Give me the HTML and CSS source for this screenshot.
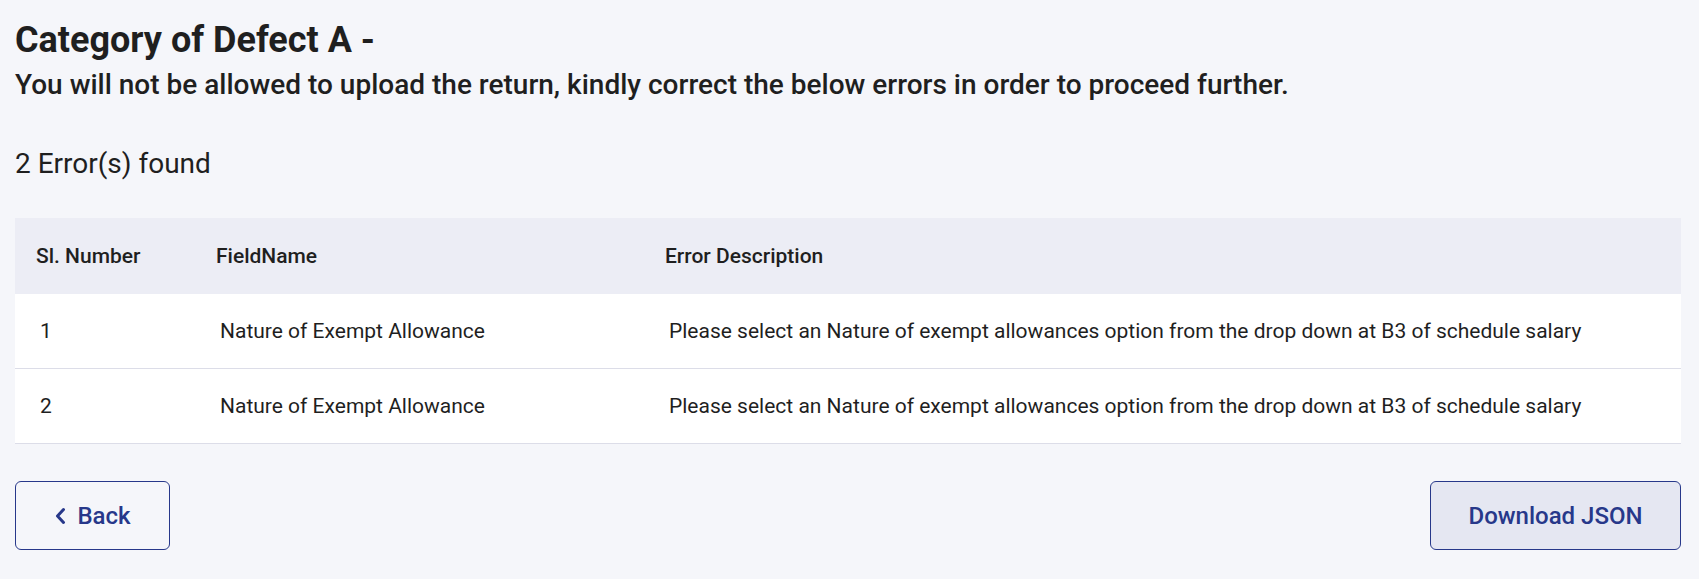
FILE: index.html
```html
<!DOCTYPE html>
<html>
<head>
<meta charset="utf-8">
<link rel="stylesheet" href="styles.css">
</head>
<body>
<div class="page">
  <h1 class="title">Category of Defect A -</h1>
  <p class="subtitle">You will not be allowed to upload the return, kindly correct the below errors in order to proceed further.</p>
  <h2 class="count">2 Error(s) found</h2>
  <table class="errors">
    <colgroup>
      <col class="w1">
      <col class="w2">
      <col>
    </colgroup>
    <thead>
      <tr>
        <th>Sl. Number</th>
        <th>FieldName</th>
        <th>Error Description</th>
      </tr>
    </thead>
    <tbody>
      <tr>
        <td>1</td>
        <td>Nature of Exempt Allowance</td>
        <td>Please select an Nature of exempt allowances option from the drop down at B3 of schedule salary</td>
      </tr>
      <tr>
        <td>2</td>
        <td>Nature of Exempt Allowance</td>
        <td>Please select an Nature of exempt allowances option from the drop down at B3 of schedule salary</td>
      </tr>
    </tbody>
  </table>
  <div class="actions">
    <button class="btn btn-back"><svg class="chev" width="12" height="18" viewBox="0 0 12 18"><path d="M9.5 2.5 L3.5 9 L9.5 15.5" fill="none" stroke="currentColor" stroke-width="3" stroke-linecap="round" stroke-linejoin="round"/></svg>Back</button>
    <button class="btn btn-download">Download JSON</button>
  </div>
</div>
</body>
</html>
```
FILE: styles.css
```css
html, body {
  margin: 0;
  padding: 0;
  background: #f5f6fa;
}
body {
  font-family: Roboto, "Noto Sans", sans-serif;
  color: #1f1f1f;
}
.page {
  padding: 16px 18px 0 15px;
}
.title {
  margin: 0;
  font-size: 36px;
  font-weight: 700;
  line-height: 48px;
}
.subtitle {
  margin: 0;
  font-size: 28px;
  font-weight: 500;
  line-height: 42px;
}
.count {
  margin: 38px 0 0;
  font-size: 28px;
  font-weight: 400;
  line-height: 40px;
}
.errors {
  margin-top: 34px;
  width: 100%;
  border-collapse: collapse;
  table-layout: fixed;
  font-size: 21px;
}
.w1 { width: 180px; }
.w2 { width: 449px; }
.errors thead tr {
  background: #ecedf5;
}
.errors th {
  text-align: left;
  font-weight: 500;
  height: 76px;
  padding: 0 0 0 21px;
}
.errors td {
  background: #ffffff;
  height: 74px;
  padding: 0 0 0 25px;
  border-bottom: 1px solid #dcdde8;
}
.actions {
  display: flex;
  justify-content: space-between;
  margin-top: 37px;
}
.btn {
  font-family: Roboto, "Noto Sans", sans-serif;
  font-size: 24px;
  font-weight: 500;
  color: #27388a;
  border: 1px solid #27388a;
  border-radius: 6px;
  height: 69px;
  display: flex;
  align-items: center;
  justify-content: center;
  gap: 11px;
  padding: 0;
}
.btn-back {
  width: 155px;
  background: transparent;
}
.btn-download {
  width: 251px;
  background: #e5e7f2;
}
.chev {
  display: block;
}
```
